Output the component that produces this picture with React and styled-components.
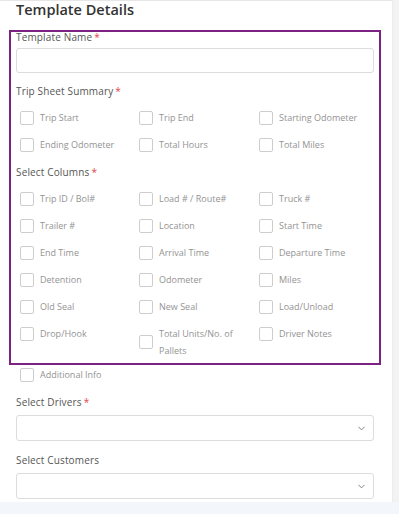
import React from 'react';
import styled, { createGlobalStyle } from 'styled-components';
import { ChevronDown } from 'lucide-react';

const GlobalStyle = createGlobalStyle`
  html, body {
    margin: 0;
    padding: 0;
    background: #fff;
    font-family: "Open Sans", "Liberation Sans", sans-serif;
  }
  * { box-sizing: border-box; }
`;

const Page = styled.div`
  width: 399px;
  height: 514px;
  display: flex;
  flex-direction: column;
  overflow: hidden;
`;

const Body = styled.div`
  display: flex;
  height: 502px;
`;

const Main = styled.div`
  width: 392px;
  border-top: 1px solid #e6e6e6;
  padding: 0 18px 0 16px;
  background: #fff;
`;

const SideStrip = styled.div`
  flex: 1;
  background: #f3f3f3;
  border-left: 1px solid #ececec;
`;

const Footer = styled.div`
  flex: 1;
  background: #f3f6fa;
`;

const Title = styled.h2`
  margin: 0;
  font-size: 14.5px;
  line-height: 18px;
  font-weight: 600;
  color: #333;
`;

const HighlightBox = styled.div`
  margin: 11px -7px 0;
  border: 2px solid #7b2283;
  padding: 0 5px 4px;
`;

const Label = styled.div`
  margin-top: ${({ $top }) => $top || 0}px;
  font-size: 10px;
  line-height: 10px;
  font-weight: 500;
  color: #555;
  letter-spacing: 0.15px;
`;

const Req = styled.span`
  color: #e0484e;
  margin-left: 2px;
`;

const TextInput = styled.div`
  margin-top: 6px;
  height: 25px;
  border: 1px solid #dcdcdc;
  border-radius: 3px;
  background: #fff;
`;

const SelectBox = styled.div`
  margin-top: 8px;
  height: 26px;
  border: 1px solid #dcdcdc;
  border-radius: 3px;
  background: #fff;
  display: flex;
  align-items: center;
  justify-content: flex-end;
  padding-right: 6px;
  color: #777;
`;

const CheckGrid = styled.div`
  margin-top: ${({ $top }) => $top || 0}px;
  padding-left: 4px;
  display: grid;
  grid-template-columns: 119px 120px 1fr;
  row-gap: 10px;
  align-items: start;
`;

const CheckItem = styled.label`
  display: flex;
  align-items: center;
`;

const Box = styled.span`
  flex: 0 0 14px;
  width: 14px;
  height: 14px;
  border: 1px solid #cdcdcd;
  border-radius: 2px;
  background: #fff;
`;

const CheckText = styled.span`
  margin-left: 6px;
  max-width: 92px;
  font-size: 9px;
  line-height: 17px;
  color: #939393;
`;

const summary = [
  'Trip Start', 'Trip End', 'Starting Odometer',
  'Ending Odometer', 'Total Hours', 'Total Miles',
];

const columns = [
  'Trip ID / Bol#', 'Load # / Route#', 'Truck #',
  'Trailer #', 'Location', 'Start Time',
  'End Time', 'Arrival Time', 'Departure Time',
  'Detention', 'Odometer', 'Miles',
  'Old Seal', 'New Seal', 'Load/Unload',
  'Drop/Hook', 'Total Units/No. of Pallets', 'Driver Notes',
];

const Check = ({ label }) => (
  <CheckItem>
    <Box />
    <CheckText>{label}</CheckText>
  </CheckItem>
);

export default function App() {
  return (
    <Page>
      <GlobalStyle />
      <Body>
        <Main>
          <Title>Template Details</Title>
          <HighlightBox>
            <Label>
              Template Name<Req>*</Req>
            </Label>
            <TextInput />
            <Label $top={13}>
              Trip Sheet Summary<Req>*</Req>
            </Label>
            <CheckGrid $top={13}>
              {summary.map((s) => (
                <Check key={s} label={s} />
              ))}
            </CheckGrid>
            <Label $top={14}>
              Select Columns<Req>*</Req>
            </Label>
            <CheckGrid $top={13}>
              {columns.map((c) => (
                <Check key={c} label={c} />
              ))}
            </CheckGrid>
          </HighlightBox>
          <CheckGrid $top={1}>
            <Check label="Additional Info" />
          </CheckGrid>
          <Label $top={14}>
            Select Drivers<Req>*</Req>
          </Label>
          <SelectBox>
            <ChevronDown size={11} strokeWidth={2} />
          </SelectBox>
          <Label $top={14}>Select Customers</Label>
          <SelectBox>
            <ChevronDown size={11} strokeWidth={2} />
          </SelectBox>
        </Main>
        <SideStrip />
      </Body>
      <Footer />
    </Page>
  );
}
